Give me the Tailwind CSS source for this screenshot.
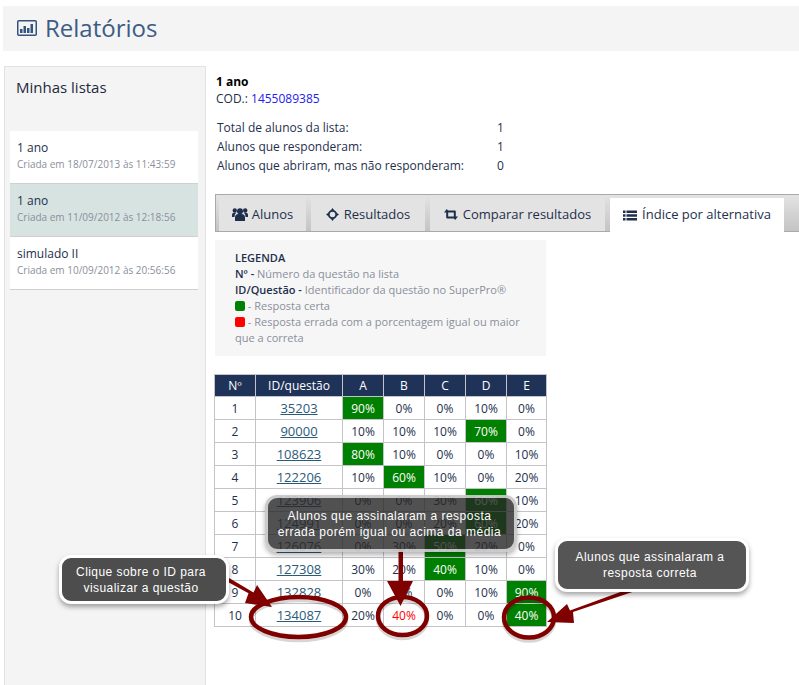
<!DOCTYPE html>
<html lang="pt">
<head>
<meta charset="utf-8">
<title>Relatórios</title>
<script src="https://cdn.jsdelivr.net/npm/@tailwindcss/browser@4"></script>
</head>
<body class="bg-white font-['Open_Sans',sans-serif] text-[12px] text-[#1e2f4d]">
<div class="relative h-[685px] w-[799px] overflow-hidden">
  <header class="ml-[3px] mt-[6px] flex h-[45px] items-center gap-[8px] bg-[#f4f4f4] pb-[2px] pl-[14px] text-[#3d5c85]">
    <svg width="20" height="16" viewBox="0 0 20 16" aria-hidden="true"><rect x="0.75" y="0.75" width="18.5" height="14.5" rx="1" fill="none" stroke="#34547d" stroke-width="1.5"/><path d="M3 9h2.500v4H3zM6.500 6h2.500v7H6.500zM10 8h2.500v5H10zM13.500 4H16v9h-2.500z" fill="#34547d"/></svg>
    <h1 class="text-[24px] leading-none">Relatórios</h1>
  </header>
  <div class="ml-[4px] mt-[15px] flex">
    <aside class="h-[622px] w-[202px] shrink-0 border border-[#e2e2e2] bg-[#f4f4f4] pl-[5px] pr-[7px]">
      <h2 class="h-[64px] pl-[6px] pt-[9px] text-[15px] leading-[22px] text-[#1e2a3c]">Minhas listas</h2>
      <ul>
        <li class="h-[53px] border-b border-[#cfcfcf] bg-white pl-[7px] pt-[8px]"><p class="leading-[18px]">1 ano</p><p class="text-[10px] leading-[14px] text-[#8a8f9c]">Criada em 18/07/2013 às 11:43:59</p></li>
        <li class="h-[53px] border-b border-[#cfcfcf] bg-[#d6e3e1] pl-[7px] pt-[8px]"><p class="leading-[18px]">1 ano</p><p class="text-[10px] leading-[14px] text-[#8a8f9c]">Criada em 11/09/2012 às 12:18:56</p></li>
        <li class="h-[53px] border-b border-[#cfcfcf] bg-white pl-[7px] pt-[8px]"><p class="leading-[18px]">simulado II</p><p class="text-[10px] leading-[14px] text-[#8a8f9c]">Criada em 10/09/2012 às 20:56:56</p></li>
      </ul>
    </aside>
    <main class="ml-[9px] min-w-0 flex-1">
      <div class="pl-px pt-[7px] leading-[17px]">
        <p class="font-bold text-black">1 ano</p>
        <p>COD.: <a class="text-[#2323e6]">1455089385</a></p>
      </div>
      <dl class="mt-[11px] pl-[2px] leading-[19px]">
        <div class="flex"><dt class="w-[280px]">Total de alunos da lista:</dt><dd>1</dd></div>
        <div class="flex"><dt class="w-[280px]">Alunos que responderam:</dt><dd>1</dd></div>
        <div class="flex"><dt class="w-[280px]">Alunos que abriram, mas não responderam:</dt><dd>0</dd></div>
      </dl>
      <nav class="-mr-[3px] mt-[19px] flex h-[38px] items-end gap-[5px] border border-[#a9a9a9] bg-gradient-to-b from-[#e3e3e3] to-[#c4c4c4] pl-[3px] text-[13px] text-[#1e2f4d]">
        <a class="-mb-px flex h-[34px] w-[87px] items-center justify-center gap-[4px] border-b border-[#a9a9a9] bg-[#e3e3e3]">
          <svg width="16" height="13" viewBox="0 0 16 13" aria-hidden="true" fill="#1e2f4d"><circle cx="8" cy="3.300" r="3"/><circle cx="2.800" cy="2.500" r="2.200"/><circle cx="13.200" cy="2.500" r="2.200"/><path d="M3 13V9.500A3.500 3.500 0 0 1 6.500 6h3A3.500 3.500 0 0 1 13 9.500V13z"/><path d="M0 9V6.800A2 2 0 0 1 2 4.800h2.200A4.500 4.500 0 0 0 2.500 8.500V9zM16 9V6.800A2 2 0 0 0 14 4.800h-2.200A4.500 4.500 0 0 1 13.500 8.500V9z"/></svg>
          Alunos</a>
        <a class="-mb-px flex h-[34px] w-[114px] items-center justify-center gap-[5px] border-b border-[#a9a9a9] bg-[#e3e3e3]">
          <svg width="13" height="13" viewBox="0 0 13 13" aria-hidden="true"><circle cx="6.500" cy="6.500" r="3.700" fill="none" stroke="#1e2f4d" stroke-width="1.800"/><path d="M6.500 0l2 2.800h-4zM6.500 13l2-2.800h-4zM0 6.500l2.800-2v4zM13 6.500l-2.800-2v4z" fill="#1e2f4d"/></svg>
          Resultados</a>
        <a class="-mb-px flex h-[34px] w-[175px] items-center justify-center gap-[5px] border-b border-[#a9a9a9] bg-[#e3e3e3]">
          <svg width="14" height="11" viewBox="0 0 14 11" aria-hidden="true" fill="#1e2f4d"><path d="M0 3.500L2.800 0l2.800 3.500H4.200V7.500H8.500l1.800 2H3.200a1 1 0 0 1-1-1V3.500zM14 7.500L11.200 11 8.400 7.500h1.400V3.500H5.500l-1.800-2h7.100a1 1 0 0 1 1 1V7.500z"/></svg>
          Comparar resultados</a>
        <a class="-mb-px flex h-[34px] w-[174px] items-center justify-center gap-[5px] bg-white">
          <svg width="14" height="11" viewBox="0 0 14 11" aria-hidden="true" fill="#1e2f4d"><path d="M0 .5h2.500v2.500H0zM3.500 .5H14v2.500H3.500zM0 4.200h2.500v2.500H0zM3.500 4.200H14v2.500H3.500zM0 8h2.500v2.500H0zM3.500 8H14v2.500H3.500z"/></svg>
          Índice por alternativa</a>
      </nav>
      <section class="mt-[8px] h-[116px] w-[331px] bg-[#f6f6f6] pl-[20px] pr-[20px] pt-[10px] text-[11px] leading-[16px] text-[#8a8f9c]">
        <p class="font-semibold text-[#1e2f4d]">LEGENDA</p>
        <p><b class="font-semibold text-[#1e2f4d]">Nº -</b> Número da questão na lista</p>
        <p><b class="font-semibold text-[#1e2f4d]">ID/Questão -</b> Identificador da questão no SuperPro®</p>
        <p><span class="inline-block h-[10px] w-[10px] translate-y-[1px] rounded-[2px] bg-[#008000]"></span> - Resposta certa</p>
        <p><span class="inline-block h-[10px] w-[10px] translate-y-[1px] rounded-[2px] bg-[#ff0000]"></span> - Resposta errada com a porcentagem igual ou maior que a correta</p>
      </section>
      <table class="mt-[18px] w-[332px] -translate-x-px table-fixed border-collapse text-center">
        <colgroup><col class="w-[41px]"><col class="w-[87px]"><col class="w-[41px]"><col class="w-[41px]"><col class="w-[41px]"><col class="w-[41px]"><col class="w-[40px]"></colgroup>
        <thead class="bg-[#1f3358] text-white">
          <tr class="h-[22px]"><th class="border border-[#c4c4c8] font-normal">Nº</th><th class="border border-[#c4c4c8] font-normal">ID/questão</th><th class="border border-[#c4c4c8] font-normal">A</th><th class="border border-[#c4c4c8] font-normal">B</th><th class="border border-[#c4c4c8] font-normal">C</th><th class="border border-[#c4c4c8] font-normal">D</th><th class="border border-[#c4c4c8] font-normal">E</th></tr>
        </thead>
        <tbody class="[&_td]:pt-px">
          <tr class="h-[23px]"><td class="border border-[#c4c4c8]">1</td><td class="border border-[#c4c4c8] text-[13px] text-[#2a5a7a] underline">35203</td><td class="border border-[#c4c4c8] bg-[#008000] text-white">90%</td><td class="border border-[#c4c4c8]">0%</td><td class="border border-[#c4c4c8]">0%</td><td class="border border-[#c4c4c8]">10%</td><td class="border border-[#c4c4c8]">0%</td></tr>
          <tr class="h-[23px]"><td class="border border-[#c4c4c8]">2</td><td class="border border-[#c4c4c8] text-[13px] text-[#2a5a7a] underline">90000</td><td class="border border-[#c4c4c8]">10%</td><td class="border border-[#c4c4c8]">10%</td><td class="border border-[#c4c4c8]">10%</td><td class="border border-[#c4c4c8] bg-[#008000] text-white">70%</td><td class="border border-[#c4c4c8]">0%</td></tr>
          <tr class="h-[23px]"><td class="border border-[#c4c4c8]">3</td><td class="border border-[#c4c4c8] text-[13px] text-[#2a5a7a] underline">108623</td><td class="border border-[#c4c4c8] bg-[#008000] text-white">80%</td><td class="border border-[#c4c4c8]">10%</td><td class="border border-[#c4c4c8]">0%</td><td class="border border-[#c4c4c8]">0%</td><td class="border border-[#c4c4c8]">10%</td></tr>
          <tr class="h-[23px]"><td class="border border-[#c4c4c8]">4</td><td class="border border-[#c4c4c8] text-[13px] text-[#2a5a7a] underline">122206</td><td class="border border-[#c4c4c8]">10%</td><td class="border border-[#c4c4c8] bg-[#008000] text-white">60%</td><td class="border border-[#c4c4c8]">10%</td><td class="border border-[#c4c4c8]">0%</td><td class="border border-[#c4c4c8]">20%</td></tr>
          <tr class="h-[23px]"><td class="border border-[#c4c4c8]">5</td><td class="border border-[#c4c4c8] text-[13px] text-[#2a5a7a] underline">123906</td><td class="border border-[#c4c4c8]">0%</td><td class="border border-[#c4c4c8]">0%</td><td class="border border-[#c4c4c8]">30%</td><td class="border border-[#c4c4c8] bg-[#008000] text-white">60%</td><td class="border border-[#c4c4c8]">10%</td></tr>
          <tr class="h-[23px]"><td class="border border-[#c4c4c8]">6</td><td class="border border-[#c4c4c8] text-[13px] text-[#2a5a7a] underline">124991</td><td class="border border-[#c4c4c8]">0%</td><td class="border border-[#c4c4c8]">0%</td><td class="border border-[#c4c4c8]">20%</td><td class="border border-[#c4c4c8] bg-[#008000] text-white">60%</td><td class="border border-[#c4c4c8]">20%</td></tr>
          <tr class="h-[23px]"><td class="border border-[#c4c4c8]">7</td><td class="border border-[#c4c4c8] text-[13px] text-[#2a5a7a] underline">126076</td><td class="border border-[#c4c4c8]">0%</td><td class="border border-[#c4c4c8]">30%</td><td class="border border-[#c4c4c8] bg-[#008000] text-white">50%</td><td class="border border-[#c4c4c8]">20%</td><td class="border border-[#c4c4c8]">0%</td></tr>
          <tr class="h-[23px]"><td class="border border-[#c4c4c8]">8</td><td class="border border-[#c4c4c8] text-[13px] text-[#2a5a7a] underline">127308</td><td class="border border-[#c4c4c8]">30%</td><td class="border border-[#c4c4c8]">20%</td><td class="border border-[#c4c4c8] bg-[#008000] text-white">40%</td><td class="border border-[#c4c4c8]">10%</td><td class="border border-[#c4c4c8]">0%</td></tr>
          <tr class="h-[23px]"><td class="border border-[#c4c4c8]">9</td><td class="border border-[#c4c4c8] text-[13px] text-[#2a5a7a] underline">132828</td><td class="border border-[#c4c4c8]">0%</td><td class="border border-[#c4c4c8]">0%</td><td class="border border-[#c4c4c8]">0%</td><td class="border border-[#c4c4c8]">10%</td><td class="border border-[#c4c4c8] bg-[#008000] text-white">90%</td></tr>
          <tr class="h-[23px]"><td class="border border-[#c4c4c8]">10</td><td class="border border-[#c4c4c8] text-[13px] text-[#2a5a7a] underline">134087</td><td class="border border-[#c4c4c8]">20%</td><td class="border border-[#c4c4c8] text-[#ff0000]">40%</td><td class="border border-[#c4c4c8]">0%</td><td class="border border-[#c4c4c8]">0%</td><td class="border border-[#c4c4c8] bg-[#008000] text-white">40%</td></tr>
        </tbody>
      </table>
    </main>
  </div>

  <!-- Annotations laid over the screenshot -->
  <svg class="pointer-events-none absolute left-0 top-0" width="799" height="685" viewBox="0 0 799 685" aria-hidden="true">
    <g fill="none" stroke="#000" stroke-opacity=".16" stroke-width="4.500" transform="translate(0 3)">
      <ellipse cx="298.500" cy="617" rx="47.500" ry="20"/><ellipse cx="402.500" cy="616" rx="24.500" ry="19"/><ellipse cx="529" cy="617.500" rx="25" ry="20"/>
    </g>
    <g fill="#800000">
      <path d="M229 578l-1.500 3.800 21 11.500-3.500 9.700 27 4-15-22-3.500 7.500z"/>
      <path d="M398.500 549h4.500v32h10l-12.500 25-13.500-25h11.500z"/>
      <path d="M634 587l2 3.800-63 21.200 1 11-27-1 20-18 3 6.500z"/>
    </g>
    <g fill="none" stroke="#800000" stroke-width="4.500">
      <ellipse cx="298.500" cy="617" rx="47.500" ry="20"/><ellipse cx="402.500" cy="616" rx="24.500" ry="19"/><ellipse cx="529" cy="617.500" rx="25" ry="20"/>
    </g>
  </svg>
  <div class="absolute left-[59px] top-[555px] flex h-[49px] w-[170px] items-center justify-center rounded-[12px] border-[3px] border-white bg-[#4d4d4d] pr-[6px] text-center font-['Liberation_Sans',sans-serif] text-[12px] leading-[16px] tracking-[.45px] text-white shadow-[0_3px_5px_rgba(0,0,0,.35)]">Clique sobre o ID para<br>visualizar a questão</div>
  <div class="absolute left-[265px] top-[495px] flex h-[57px] w-[252px] items-center justify-center rounded-[12px] border-[3px] border-white/70 bg-[#262626]/80 pr-[3px] text-center font-['Liberation_Sans',sans-serif] text-[12px] leading-[16px] tracking-[.5px] text-white shadow-[0_3px_5px_rgba(0,0,0,.3)]">Alunos que assinalaram a resposta<br>errada porém igual ou acima da média</div>
  <div class="absolute left-[555px] top-[538px] flex h-[54px] w-[194px] items-center justify-center rounded-[12px] border-[3px] border-white bg-[#555555] pr-[4px] text-center font-['Liberation_Sans',sans-serif] text-[12px] leading-[16px] tracking-[.45px] text-white shadow-[0_3px_5px_rgba(0,0,0,.35)]">Alunos que assinalaram a<br>resposta correta</div>
</div>
</body>
</html>
